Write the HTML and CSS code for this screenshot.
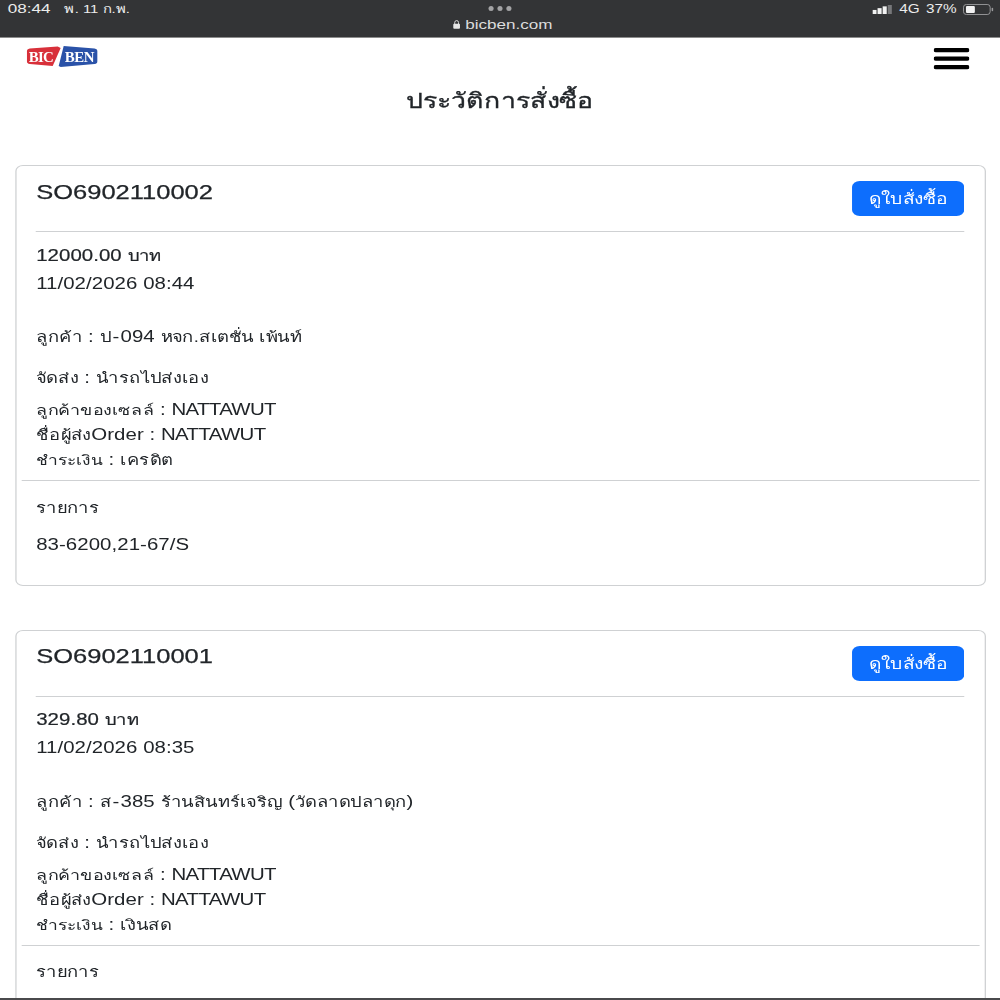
FILE: index.html
```html
<!DOCTYPE html>
<html lang="th">
<head>
<meta charset="utf-8">
<title>ประวัติการสั่งซื้อ</title>
<link rel="stylesheet" href="styles.css">
</head>
<body>
<div class="screen">
  <header class="status">
    <div class="status-left"><span class="time">08:44</span><span class="date">พ. 11 ก.พ.</span></div>
    <div class="status-mid">
      <div class="dots"><i></i><i></i><i></i></div>
      <div class="url">
        <svg class="lock" viewBox="0 0 8 9" preserveAspectRatio="none"><path d="M2 4V2.6a2 2 0 0 1 4 0V4" fill="none" stroke="#ddd" stroke-width="1"/><rect x="0.5" y="3.8" width="7" height="5" rx="1" fill="#e6e6e6"/></svg>
        <span>bicben.com</span>
      </div>
    </div>
    <div class="status-right">
      <svg class="signal" viewBox="0 0 20 10" preserveAspectRatio="none"><rect x="0" y="5.5" width="4" height="4.5" fill="#f2f2f2"/><rect x="5" y="3.5" width="4" height="6.5" fill="#f2f2f2"/><rect x="10" y="1.5" width="4" height="8.5" fill="#f2f2f2"/><rect x="15" y="0" width="4" height="10" fill="#77787a"/></svg>
      <span class="net">4G</span>
      <span class="pct">37%</span>
      <svg class="battery" viewBox="0 0 31 12" preserveAspectRatio="none"><rect x="0.5" y="0.5" width="27" height="11" rx="3" fill="none" stroke="#9a9a9c"/><rect x="3" y="2.2" width="9" height="7.6" rx="1.2" fill="#f2f2f2"/><rect x="29" y="4" width="1.6" height="4" rx="0.8" fill="#9a9a9c"/></svg>
    </div>
  </header>

  <nav class="navbar">
    <svg class="logo" viewBox="0 0 71 21" preserveAspectRatio="none">
      <path d="M3 2.5 L31 0.5 L34 2 L26 20 L3 18 Q0 17.5 0 15 V5.5 Q0 3 3 2.5Z" fill="#d8303a"/>
      <path d="M37 0 L68 2.5 Q71 3 71 5.5 V15 Q71 17.5 68 18 L34 21 L32 20 Z" fill="#2a52a8"/>
      <text class="logo-text" x="2" y="16" textLength="25">BIC</text>
      <text class="logo-text" x="38" y="16" textLength="30">BEN</text>
    </svg>
    <svg class="burger" viewBox="0 0 36 23" preserveAspectRatio="none"><path d="M2 3.2H34M2 11.7H34M2 20.2H34" stroke="#000" stroke-width="4.2" stroke-linecap="round" fill="none"/></svg>
  </nav>

  <h1 class="page-title">ประวัติการสั่งซื้อ</h1>

  <section class="card">
    <div class="card-head">
      <h2 class="order-no">SO6902110002</h2>
      <a class="btn">ดูใบสั่งซื้อ</a>
    </div>
    <div class="info">
      <p class="row amount">12000.00 <span class="th">บาท</span></p>
      <p class="row gap-date">11/02/2026 08:44</p>
      <p class="row gap-customer"><span class="th">ลูกค้า</span> : <span class="th">ป</span><span class="dash">-</span>094 <span class="th">หจก.สเตชั่น เพ้นท์</span></p>
      <p class="row gap-ship"><span class="th">จัดส่ง</span> : <span class="th">นำรถไปส่งเอง</span></p>
      <p class="row gap-sales"><span class="th sales">ลูกค้าของเซลล์</span> : <span class="kern">NATTAWUT</span></p>
      <p class="row"><span class="th">ชื่อผู้ส่ง</span>Order : <span class="kern">NATTAWUT</span></p>
      <p class="row"><span class="th pay">ชำระเงิน</span> : <span class="th">เครดิต</span></p>
    </div>
    <div class="items">
      <p class="row"><span class="th">รายการ</span></p>
      <p class="row gap-item">83-6200,21-67/S</p>
    </div>
  </section>

  <section class="card">
    <div class="card-head">
      <h2 class="order-no">SO6902110001</h2>
      <a class="btn">ดูใบสั่งซื้อ</a>
    </div>
    <div class="info">
      <p class="row amount">329.80 <span class="th">บาท</span></p>
      <p class="row gap-date">11/02/2026 08:35</p>
      <p class="row gap-customer"><span class="th">ลูกค้า</span> : <span class="th">ส</span><span class="dash">-</span>385 <span class="th">ร้านสินทร์เจริญ</span> (<span class="th">วัดลาดปลาดุก</span>)</p>
      <p class="row gap-ship"><span class="th">จัดส่ง</span> : <span class="th">นำรถไปส่งเอง</span></p>
      <p class="row gap-sales"><span class="th sales">ลูกค้าของเซลล์</span> : <span class="kern">NATTAWUT</span></p>
      <p class="row"><span class="th">ชื่อผู้ส่ง</span>Order : <span class="kern">NATTAWUT</span></p>
      <p class="row"><span class="th pay">ชำระเงิน</span> : <span class="th">เงินสด</span></p>
    </div>
    <div class="items">
      <p class="row"><span class="th">รายการ</span></p>
    </div>
  </section>
</div>
</body>
</html>
```
FILE: styles.css
```css
html, body {
  margin: 0;
  padding: 0;
  height: 1000px;
  overflow: hidden;
  background: #fff;
}
.screen {
  box-sizing: border-box;
  width: 784px;
  height: 1000px;
  overflow: hidden;
  transform: scaleX(1.2755);
  transform-origin: left top;
  border-bottom: 2px solid #4a4a4c;
  font-family: "Liberation Sans", "Noto Sans", "DejaVu Sans", sans-serif;
  font-size: 16px;
  color: #212529;
}
.status {
  box-sizing: border-box;
  height: 38px;
  background: #333436;
  border-bottom: 1px solid #8c8c8c;
  color: #ececec;
  display: grid;
  grid-template-columns: 1fr auto 1fr;
  padding: 0 5px 0 6px;
}
.status-left {
  display: flex;
  align-items: baseline;
  gap: 11px;
  padding-top: 2px;
  font-size: 11.7px;
  line-height: 14px;
}
.time { font-size: 13.4px; }
.status-mid {
  display: flex;
  flex-direction: column;
  align-items: center;
  padding-top: 6px;
}
.dots { display: flex; gap: 3px; }
.dots i {
  display: block;
  width: 4px;
  height: 5px;
  border-radius: 50%;
  background: #a3a3a5;
}
.url {
  display: flex;
  align-items: center;
  gap: 4px;
  margin: 5px 0 0 3px;
  font-size: 13.4px;
  line-height: 17px;
  color: #dcdcdc;
}
.lock { width: 6px; height: 9px; }
.status-right {
  display: flex;
  justify-content: flex-end;
  align-items: center;
  height: 18px;
  font-size: 12px;
}
.signal { width: 16px; height: 9px; margin-right: 5px; }
.net { margin-right: 5px; }
.pct { margin-right: 5px; }
.battery { width: 24px; height: 11px; }

.navbar {
  display: flex;
  justify-content: space-between;
  align-items: flex-start;
  height: 46px;
  padding: 8px 24px 0 21px;
  box-sizing: border-box;
}
.logo { width: 55.5px; height: 21px; }
.logo-text {
  font-family: "Liberation Serif", serif;
  font-weight: 700;
  font-size: 15px;
  fill: #fff;
}
.burger { width: 28px; height: 23px; margin-top: 1px; }
.page-title {
  margin: 0 0 47px;
  text-align: center;
  font-size: 20.9px;
  font-weight: 400;
  -webkit-text-stroke: 0.3px #212529;
  line-height: 34px;
  height: 34px;
}
.card {
  box-sizing: border-box;
  width: 761px;
  margin: 0 0 44px 11.6px;
  padding: 0 4px 28px;
  border: 1px solid #cfd1d3;
  border-radius: 6px;
}
.card-head {
  display: flex;
  justify-content: space-between;
  align-items: flex-start;
  margin: 0 11.75px;
  padding: 15px 0;
  border-bottom: 1px solid #cfd1d3;
}
.order-no {
  margin: -1.5px 0 0;
  font-size: 20px;
  font-weight: 400;
  line-height: 24px;
  -webkit-text-stroke: 0.25px #212529;
}
.btn {
  display: block;
  width: 87.8px;
  height: 35px;
  overflow: hidden;
  border-radius: 6px;
  background: #0d6efd;
  color: #fff;
  text-align: center;
  font-size: 15.1px;
  line-height: 35px;
}
.info {
  padding: 10.5px 11.75px 8px;
  border-bottom: 1px solid #cfd1d3;
}
.items { padding: 13.5px 11.75px 0; }
.row {
  margin: 0;
  height: 25px;
  font-size: 16px;
  line-height: 25px;
  letter-spacing: 0.05px;
}
.th { font-size: 14.4px; line-height: 1; }
.sales { font-size: 14px; }
.pay { font-size: 13.6px; }
.dash { padding: 0 1px; }
.kern { letter-spacing: -0.5px; }
.amount { -webkit-text-stroke: 0.2px #212529; }
.gap-date { margin-top: 3px; }
.gap-customer { margin-top: 28.5px; }
.gap-ship { margin-top: 16px; }
.gap-sales { margin-top: 7px; }
.gap-item { margin-top: 12px; }
```
